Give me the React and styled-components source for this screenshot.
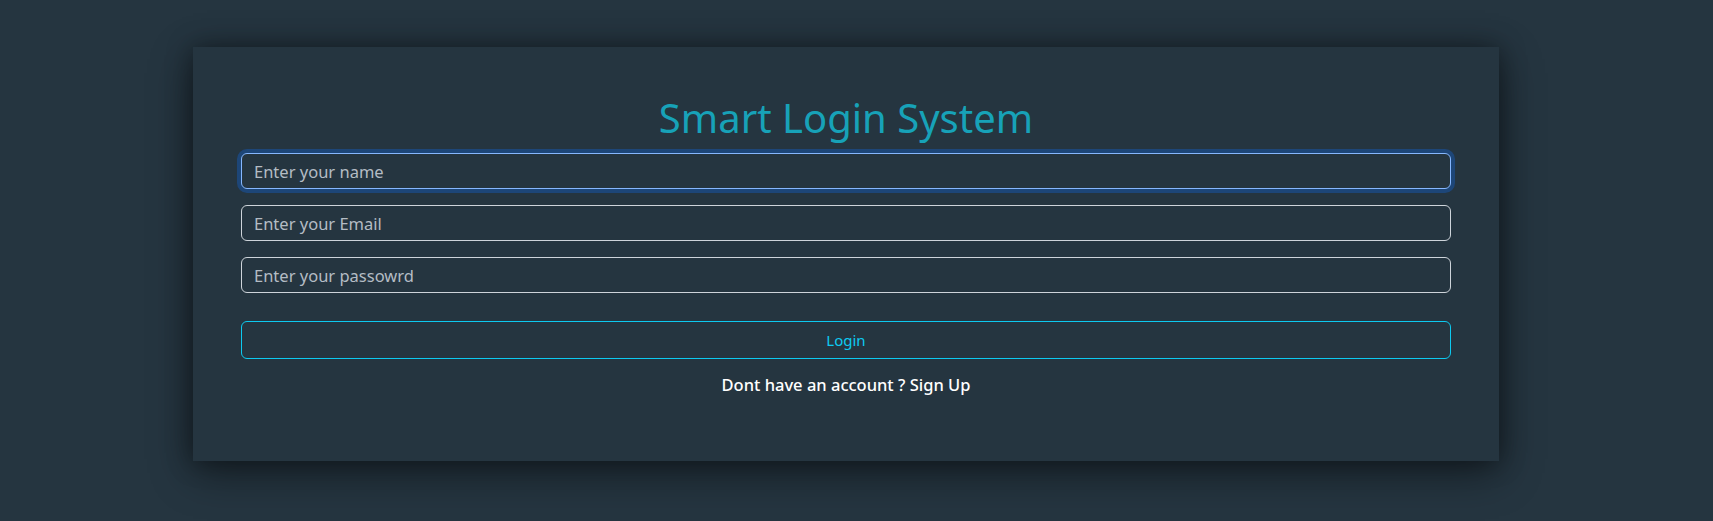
import React from 'react'
import styled, { createGlobalStyle } from 'styled-components'

const GlobalStyle = createGlobalStyle`
  * { box-sizing: border-box; }
  body {
    margin: 0;
    background: #253540;
    font-family: "Noto Sans", "Open Sans", sans-serif;
  }
`

const Page = styled.div`
  min-height: 521px;
  padding: 47px 0 0 193px;
`

const Card = styled.div`
  width: 1306px;
  height: 414px;
  background: #253540;
  box-shadow: 0 12px 40px rgba(0, 0, 0, 0.45), 0 0 24px rgba(0, 0, 0, 0.35);
  padding: 43px 48px 0;
  display: flex;
  flex-direction: column;
`

const Title = styled.h1`
  margin: 0 0 7px;
  text-align: center;
  font-weight: 400;
  font-size: 40px;
  line-height: 56px;
  color: #17a2b8;
`

const Form = styled.form`
  display: flex;
  flex-direction: column;
  gap: 16px;
`

const Input = styled.input`
  width: 100%;
  height: 36px;
  padding: 0 12px;
  font-family: inherit;
  font-size: 16.5px;
  color: #dee2e6;
  background: #253540;
  border: 1px solid ${p => (p.$focused ? '#86b7fe' : '#ced4da')};
  border-radius: 6px;
  box-shadow: ${p => (p.$focused ? '0 0 0 4px rgba(13, 110, 253, 0.3)' : 'none')};
  outline: none;
  &::placeholder { color: #b4bcc4; }
`

const Button = styled.button`
  margin-top: 12px;
  width: 100%;
  height: 38px;
  background: transparent;
  border: 1px solid #0dcaf0;
  border-radius: 6px;
  color: #0dcaf0;
  font-family: inherit;
  font-size: 15px;
  cursor: pointer;
`

const Footer = styled.p`
  margin: 14px 0 0;
  text-align: center;
  color: #ffffff;
  font-size: 16.5px;
  font-weight: 500;
`

export default function App() {
  return (
    <>
      <GlobalStyle />
      <Page>
        <Card>
          <Title>Smart Login System</Title>
          <Form onSubmit={e => e.preventDefault()}>
            <Input $focused autoFocus type="text" placeholder="Enter your name" />
            <Input type="email" placeholder="Enter your Email" />
            <Input type="password" placeholder="Enter your passowrd" />
            <Button type="submit">Login</Button>
          </Form>
          <Footer>Dont have an account ? Sign Up</Footer>
        </Card>
      </Page>
    </>
  )
}
